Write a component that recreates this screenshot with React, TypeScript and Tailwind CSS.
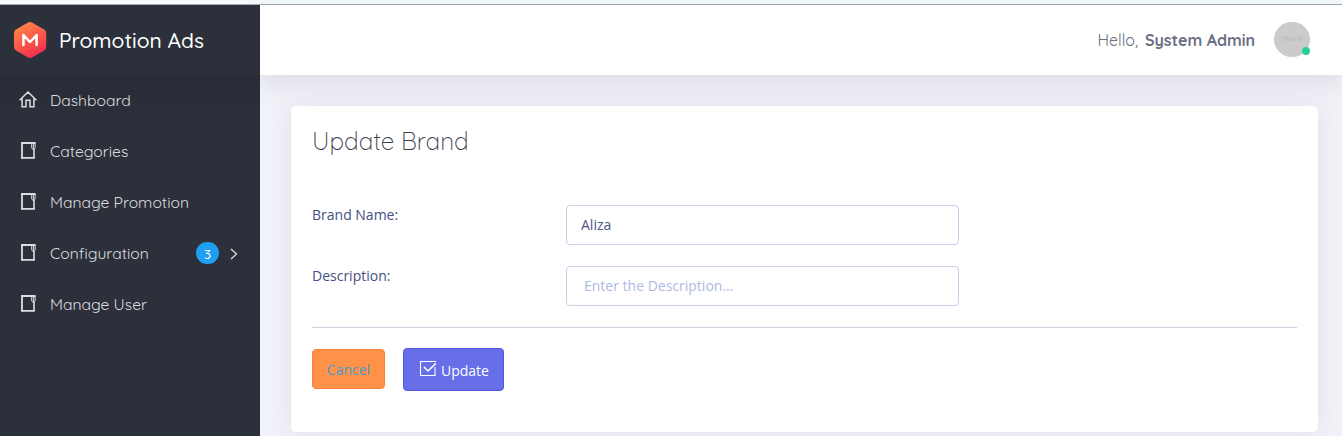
import React from 'react';

const heading = "font-['Quicksand','Lato',sans-serif]";

function Logo() {
  return (
    <svg width="34" height="38" viewBox="0 0 34 38" className="shrink-0">
      <defs>
        <linearGradient id="logo" x1="0.2" y1="0" x2="0.7" y2="1">
          <stop offset="0" stopColor="#ff8a48" />
          <stop offset="0.55" stopColor="#fb5647" />
          <stop offset="1" stopColor="#ee2b51" />
        </linearGradient>
      </defs>
      <path d="M14.6 1.7Q17 .4 19.4 1.7L31.2 8.4Q33.2 9.6 33.2 12V26Q33.2 28.4 31.2 29.6L19.4 36.3Q17 37.6 14.6 36.3L3 29.6Q1 28.4 1 26V12Q1 9.6 3 8.4Z" fill="url(#logo)" />
      <path d="M10.4 24V14L17 21L23.6 14V24" fill="none" stroke="#fff" strokeWidth="2.5" strokeLinejoin="round" strokeLinecap="round" />
    </svg>
  );
}

function HomeIcon() {
  return (
    <svg width="18" height="17" viewBox="0 0 18 17" fill="none" stroke="#dcdde0" strokeWidth="1.5" className="shrink-0">
      <path d="M.6 9.3L9 1L17.4 9.3M3.1 7.2V15.8H7V9.2H11V15.8H14.9V7.2" />
    </svg>
  );
}

function BookIcon() {
  return (
    <svg width="18" height="18" viewBox="0 0 18 18" fill="none" stroke="#dcdde0" className="shrink-0">
      <path d="M3 1V17.6" strokeWidth="1.8" />
      <path d="M2.1 2H16.6M2.1 16.9H15.9" strokeWidth="1.9" />
      <path d="M15 8V17" strokeWidth="1.6" />
      <path d="M12.7 2V7.2L14.4 8.6L16.1 7.2V2M14.4 3V8.4" strokeWidth="1" />
    </svg>
  );
}

type Item = { label: string; icon: 'home' | 'book'; badge?: string };

const items: Item[] = [
  { label: 'Dashboard', icon: 'home' },
  { label: 'Categories', icon: 'book' },
  { label: 'Manage Promotion', icon: 'book' },
  { label: 'Configuration', icon: 'book', badge: '3' },
  { label: 'Manage User', icon: 'book' },
];

function Sidebar() {
  return (
    <aside className="relative z-20 flex w-[260px] shrink-0 flex-col bg-[#2c303b]">
      <div className="flex h-[70px] shrink-0 items-center pl-[13px]">
        <Logo />
        <span className={`${heading} ml-3 whitespace-nowrap text-[21px] font-medium leading-none text-white`}>Promotion Ads</span>
      </div>
      <nav className="flex flex-1 flex-col">
        {items.map((item) => (
          <a key={item.label} className="flex h-[51px] shrink-0 items-center pl-[19px] pr-[21px] first:bg-linear-to-b first:from-[#292c36] first:to-[#2c303b]">
            <span className="-mt-[3px] flex">{item.icon === 'home' ? <HomeIcon /> : <BookIcon />}</span>
            <span className={`${heading} ml-[13px] whitespace-nowrap text-[15.68px] font-normal leading-none text-[#dcdcdf]`}>{item.label}</span>
            {item.badge && (
              <span className="-mt-px ml-auto flex items-center gap-[11px]">
                <span className={`${heading} flex h-[22px] w-[23px] items-center justify-center rounded-full bg-[#1e9ff2] pt-px text-[13.5px] font-medium leading-none text-white`}>{item.badge}</span>
                <svg width="9" height="12" viewBox="0 0 9 12" fill="none" stroke="#dcdde0" strokeWidth="1.3" className="mt-px">
                  <path d="M1 1L6.5 6L1 11" />
                </svg>
              </span>
            )}
          </a>
        ))}
      </nav>
    </aside>
  );
}

function Header() {
  return (
    <header className="z-10 flex h-[70px] shrink-0 items-center justify-end bg-white pr-8 shadow-[0_8px_24px_rgba(40,42,60,0.1)]">
      <span className={`${heading} whitespace-nowrap text-[16px] font-normal leading-none text-[#6b6f82]`}>Hello,</span>
      <span className={`${heading} ml-[7px] whitespace-nowrap text-[16px] font-bold leading-none text-[#6b6f82]`}>System Admin</span>
      <div className="relative -mt-[2px] ml-[19px] flex h-[35px] w-9 items-center justify-center rounded-full bg-[#cbcbcb]">
        <span className="whitespace-nowrap font-['Open_Sans',sans-serif] text-[4.5px] leading-none text-[#aaaaaa]">110 x 110</span>
        <span className="absolute bottom-[2px] right-0 size-2 rounded-full bg-[#28d094]" />
      </div>
    </header>
  );
}

export default function App() {
  return (
    <div className="flex h-[436px] w-full flex-col overflow-hidden bg-[#f1f2f8] font-['Open_Sans',sans-serif] text-[14px] text-[#464f83]">
      <div className="h-[5px] shrink-0 border-b border-[#a5adb2] bg-[#f4f9fc]" />
      <div className="flex min-h-0 flex-1">
        <Sidebar />
        <div className="flex min-w-0 flex-1 flex-col">
          <Header />
          <main className="pl-[31px] pr-6 pt-[31px]">
            <section className="h-[326px] rounded-[5px] bg-white px-[21px] pt-[20px] shadow-[0_0_24px_rgba(62,57,107,0.09)]">
              <h1 className={`${heading} h-[79px] whitespace-nowrap text-[24.4px] font-light leading-[30px] text-[#3c3e4c]`}>Update Brand</h1>
              <form>
                <div className="flex h-[61px]">
                  <label className="w-[254px] leading-[20px]">Brand Name:</label>
                  <input defaultValue="Aliza" className="h-10 w-[393px] rounded-[4px] border border-[#cacfe7] bg-white px-[14px] pb-[2px] text-[#4e5687] outline-none" />
                </div>
                <div className="flex h-[62px] border-b border-[#cfd1e1]">
                  <label className="w-[254px] leading-[20px]">Description:</label>
                  <input placeholder="Enter the Description..." className="h-10 w-[393px] rounded-[4px] border border-[#cacfe7] bg-white px-[17px] pb-[2px] outline-none placeholder:text-[#b0b9df]" />
                </div>
                <div className="flex items-start gap-[18px] pt-5">
                  <button type="button" className="mt-px h-10 w-[73px] rounded-[4px] border border-[#ff8038] bg-[#ff9149] text-[#479bcb]">Cancel</button>
                  <button type="button" className="flex h-[43px] w-[101px] items-center rounded-[4px] border border-[#5259df] bg-[#666ee8] pl-[15px] text-white">
                    <svg width="18" height="17" viewBox="0 0 18 17" fill="none" stroke="currentColor" className="mb-[3px]">
                      <path d="M17 1.5H1.5V15.5H16V7" strokeWidth="1.1" />
                      <path d="M5 7L9 11L17 3.2" strokeWidth="1.6" />
                    </svg>
                    <span className="ml-1 pt-px font-medium">Update</span>
                  </button>
                </div>
              </form>
            </section>
          </main>
        </div>
      </div>
    </div>
  );
}
